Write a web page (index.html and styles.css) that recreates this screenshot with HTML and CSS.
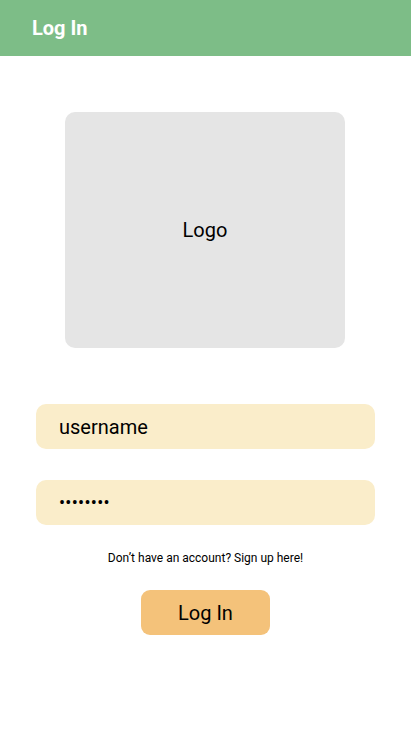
FILE: index.html
```html
<!DOCTYPE html>
<html>
<head>
<meta charset="utf-8">
<link rel="stylesheet" href="styles.css">
</head>
<body>
<header class="appbar"><h1 class="title">Log In</h1></header>
<main class="content">
  <div class="logo">Logo</div>
  <div class="field field-user">username</div>
  <div class="field field-pass">••••••••</div>
  <p class="signup">Don’t have an account? Sign up here!</p>
  <button class="btn">Log In</button>
</main>
</body>
</html>
```
FILE: styles.css
```css
* { box-sizing: border-box; }
body {
  margin: 0;
  font-family: Roboto, "Noto Sans", sans-serif;
  background: #fff;
  color: #000;
}
.appbar {
  height: 56px;
  background: #7dbd87;
  display: flex;
  align-items: center;
  padding-left: 32px;
}
.title {
  margin: 0;
  color: #fff;
  font-size: 20px;
  font-weight: 700;
}
.content {
  display: flex;
  flex-direction: column;
  align-items: center;
  padding-top: 56px;
}
.logo {
  width: 280px;
  height: 236px;
  background: #e5e5e5;
  border-radius: 10px;
  display: flex;
  align-items: center;
  justify-content: center;
  font-size: 20px;
  margin-right: 1px;
}
.field {
  width: 339px;
  height: 45px;
  background: #faedca;
  border-radius: 10px;
  display: flex;
  align-items: center;
  padding-left: 23px;
  font-size: 20px;
}
.field-user { margin-top: 56px; }
.field-pass { margin-top: 31px; font-size: 18px; letter-spacing: 0.3px; }
.signup {
  margin: 26px 0 0;
  font-size: 12px;
  line-height: 14px;
}
.btn {
  margin-top: 25px;
  width: 129px;
  height: 45px;
  border: none;
  border-radius: 9px;
  background: #f4c27a;
  font-family: Roboto, "Noto Sans", sans-serif;
  font-size: 20px;
  color: #000;
  padding: 0;
}
```
